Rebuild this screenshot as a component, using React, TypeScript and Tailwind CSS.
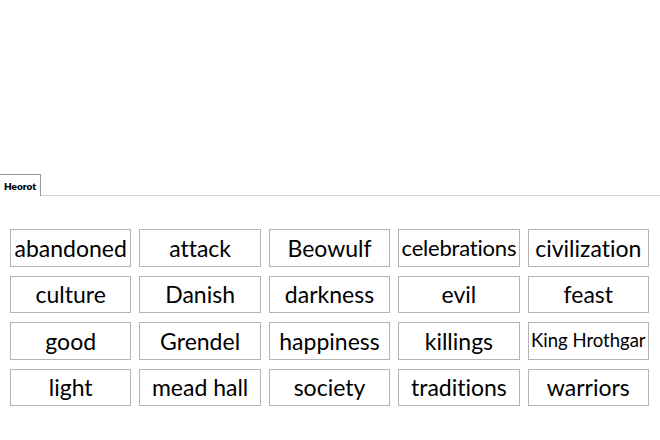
const words = [
  'abandoned',
  'attack',
  'Beowulf',
  'celebrations',
  'civilization',
  'culture',
  'Danish',
  'darkness',
  'evil',
  'feast',
  'good',
  'Grendel',
  'happiness',
  'killings',
  'King Hrothgar',
  'light',
  'mead hall',
  'society',
  'traditions',
  'warriors',
]

// labels that need tighter type to stay inside the card
const sizeFor = (w: string) => {
  if (w === 'King Hrothgar') return 'text-[18.5px]'
  if (w === 'celebrations') return 'text-[22px] tracking-[-0.2px]'
  return 'text-[23px]'
}

export default function App() {
  return (
    <div
      className="w-[660px] h-[440px] bg-white overflow-hidden [font-variant-ligatures:none]"
      style={{ fontFamily: 'Lato, "Open Sans", sans-serif' }}
    >
      <div className="h-[174px]" />

      {/* tab strip */}
      <div className="flex items-end h-[22px]">
        <div className="w-[41px] h-[22px] border-t border-r border-[#9a9a9a] bg-white flex items-center pl-[4px] pt-[1px]">
          <span className="text-[10px] font-extrabold text-black leading-none">Heorot</span>
        </div>
        <div className="flex-1 border-b border-[#d4d4d4]" />
      </div>

      {/* word cards */}
      <div className="pt-[33px] pl-[10px] w-[649px] grid grid-cols-5 gap-x-[8px] gap-y-[9px]">
        {words.map((w) => (
          <div
            key={w}
            className="h-[37.5px] border border-[#b4b4b4] bg-white flex items-center justify-center text-black whitespace-nowrap"
          >
            <span className={sizeFor(w)}>{w}</span>
          </div>
        ))}
      </div>
    </div>
  )
}
